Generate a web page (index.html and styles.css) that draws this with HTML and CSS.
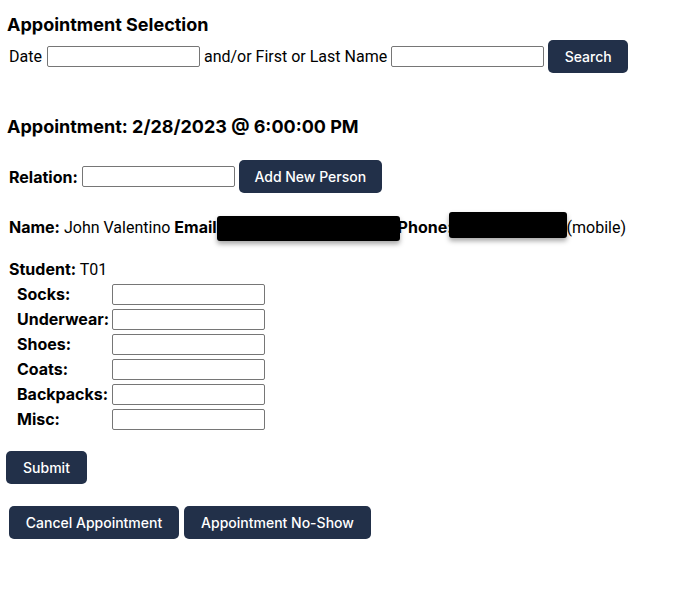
FILE: index.html
```html
<!DOCTYPE html>
<html>
<head>
<meta charset="utf-8">
<link rel="stylesheet" href="styles.css">
</head>
<body>
<h3 class="title">Appointment Selection</h3>
<div class="search-row">
  <label class="lbl">Date</label>
  <input type="text" class="field">
  <label class="lbl">and/or First or Last Name</label>
  <input type="text" class="field">
  <button class="btn search-btn">Search</button>
</div>

<h3 class="title appt">Appointment: 2/28/2023 @ 6:00:00 PM</h3>

<div class="relation-row">
  <b>Relation:</b>
  <input type="text" class="field">
  <button class="btn">Add New Person</button>
</div>

<div class="person-row"><b>Name:</b> John Valentino <b>Email</b><span class="gap-email"></span><b>Phone:</b><span class="gap-phone"></span>(mobile)<span class="redact redact-email"></span><span class="redact redact-phone"></span></div>

<div class="student"><b>Student:</b> T01</div>
<div class="items">
  <b>Socks:</b><input type="text" class="field">
  <b>Underwear:</b><input type="text" class="field">
  <b>Shoes:</b><input type="text" class="field">
  <b>Coats:</b><input type="text" class="field">
  <b>Backpacks:</b><input type="text" class="field">
  <b>Misc:</b><input type="text" class="field">
</div>

<button class="btn submit-btn">Submit</button>

<div class="actions">
  <button class="btn">Cancel Appointment</button>
  <button class="btn">Appointment No-Show</button>
</div>
</body>
</html>
```

FILE: styles.css
```css
body {
  margin: 8px 6px;
  font-family: Roboto, "Liberation Sans", sans-serif;
  font-size: 16px;
  color: #000;
  background: #fff;
}
b {
  font-family: Inter, "Liberation Sans", sans-serif;
  font-weight: 700;
}
.title {
  font-family: Inter, "Liberation Sans", sans-serif;
  font-size: 18px;
  font-weight: 700;
  margin: 5px 1px 0;
  line-height: 24px;
}
.search-row {
  display: flex;
  align-items: center;
  gap: 4px;
  margin-top: 3px;
  padding-left: 3px;
}
.search-row .lbl:first-child {
  margin-right: 1px;
}
.field {
  width: 153px;
  height: 21px;
  box-sizing: border-box;
  border: 1px solid #767676;
  border-radius: 2px;
  padding: 1px 2px;
  margin: 0;
  font-size: 13px;
}
.btn {
  background: #223049;
  color: #fff;
  border: none;
  border-radius: 5px;
  height: 33px;
  padding: 0 17px;
  font-family: Inter, "Liberation Sans", sans-serif;
  font-size: 14px;
  font-weight: 500;
}
.search-btn {
  width: 80px;
  padding: 0;
}
.appt {
  margin-top: 42px;
}
.relation-row {
  display: flex;
  align-items: center;
  gap: 4px;
  margin-top: 21px;
  padding-left: 3px;
}
.relation-row .btn {
  width: 143px;
  padding: 0;
}
.person-row {
  position: relative;
  margin-top: 22px;
  padding-left: 3px;
  line-height: 24px;
  white-space: nowrap;
}
.gap-email {
  display: inline-block;
  width: 181px;
}
.gap-phone {
  display: inline-block;
  width: 114px;
}
.redact {
  position: absolute;
  background: #000;
  border-radius: 3px;
  box-shadow: 0 3px 5px rgba(0, 0, 0, 0.35);
}
.redact-email {
  left: 211px;
  top: 1px;
  width: 183px;
  height: 25px;
}
.redact-phone {
  left: 443px;
  top: -3px;
  width: 118px;
  height: 26px;
}
.student {
  margin-top: 17px;
  padding-left: 3px;
  line-height: 24px;
}
.items {
  display: grid;
  grid-template-columns: 95px 153px;
  row-gap: 4px;
  padding-left: 11px;
  align-items: center;
  margin-top: 2px;
}
.items b {
  line-height: 21px;
}
.submit-btn {
  margin-top: 21px;
  width: 81px;
  padding: 0;
  display: block;
}
.actions {
  display: flex;
  gap: 5px;
  margin-top: 22px;
  padding-left: 3px;
}
.actions .btn:first-child {
  width: 170px;
  padding: 0;
}
.actions .btn:last-child {
  width: 187px;
  padding: 0;
}
```
